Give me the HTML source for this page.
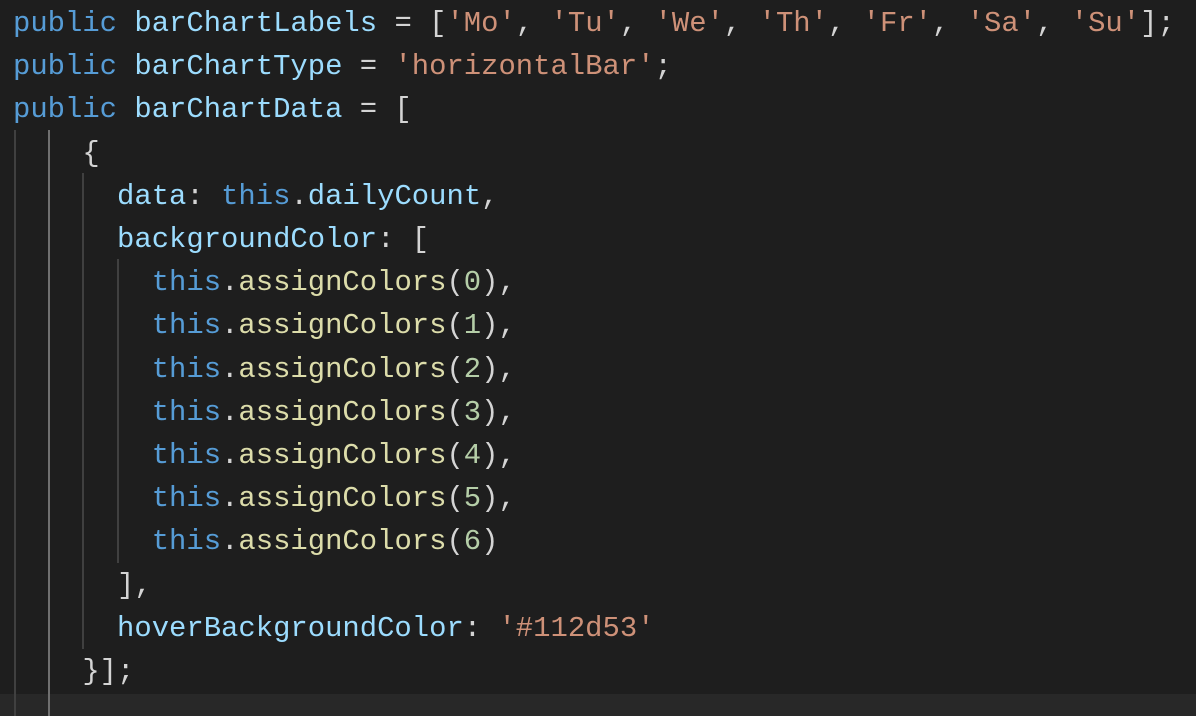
<!DOCTYPE html>
<html><head><meta charset="utf-8"><style>
html,body{margin:0;padding:0;background:#1e1e1e;width:1196px;height:716px;overflow:hidden;position:relative}
pre{position:absolute;left:13px;top:2px;margin:0;font-family:"Liberation Mono",monospace;font-size:28.9px;line-height:43.2px;color:#d4d4d4;white-space:pre}
.k{color:#569cd6}.p{color:#9cdcfe}.s{color:#ce9178}.f{color:#dcdcaa}.n{color:#b5cea8}
.g{position:absolute;width:2px;background:#404040}
.hl{position:absolute;left:0;top:694px;width:1196px;height:22px;background:#282828}
</style></head><body>
<div class="hl"></div>
<div class="g" style="left:14px;top:130px;height:586px"></div>
<div class="g" style="left:48px;top:130px;height:586px;background:#707070"></div>
<div class="g" style="left:82px;top:173px;height:476px"></div>
<div class="g" style="left:117px;top:259px;height:304px"></div>
<pre><span class="k">public</span> <span class="p">barChartLabels</span> = [<span class="s">'Mo'</span>, <span class="s">'Tu'</span>, <span class="s">'We'</span>, <span class="s">'Th'</span>, <span class="s">'Fr'</span>, <span class="s">'Sa'</span>, <span class="s">'Su'</span>];
<span class="k">public</span> <span class="p">barChartType</span> = <span class="s">'horizontalBar'</span>;
<span class="k">public</span> <span class="p">barChartData</span> = [
    {
      <span class="p">data</span>: <span class="k">this</span>.<span class="p">dailyCount</span>,
      <span class="p">backgroundColor</span>: [
        <span class="k">this</span>.<span class="f">assignColors</span>(<span class="n">0</span>),
        <span class="k">this</span>.<span class="f">assignColors</span>(<span class="n">1</span>),
        <span class="k">this</span>.<span class="f">assignColors</span>(<span class="n">2</span>),
        <span class="k">this</span>.<span class="f">assignColors</span>(<span class="n">3</span>),
        <span class="k">this</span>.<span class="f">assignColors</span>(<span class="n">4</span>),
        <span class="k">this</span>.<span class="f">assignColors</span>(<span class="n">5</span>),
        <span class="k">this</span>.<span class="f">assignColors</span>(<span class="n">6</span>)
      ],
      <span class="p">hoverBackgroundColor</span>: <span class="s">'#112d53'</span>
    }];
</pre>
</body></html>
